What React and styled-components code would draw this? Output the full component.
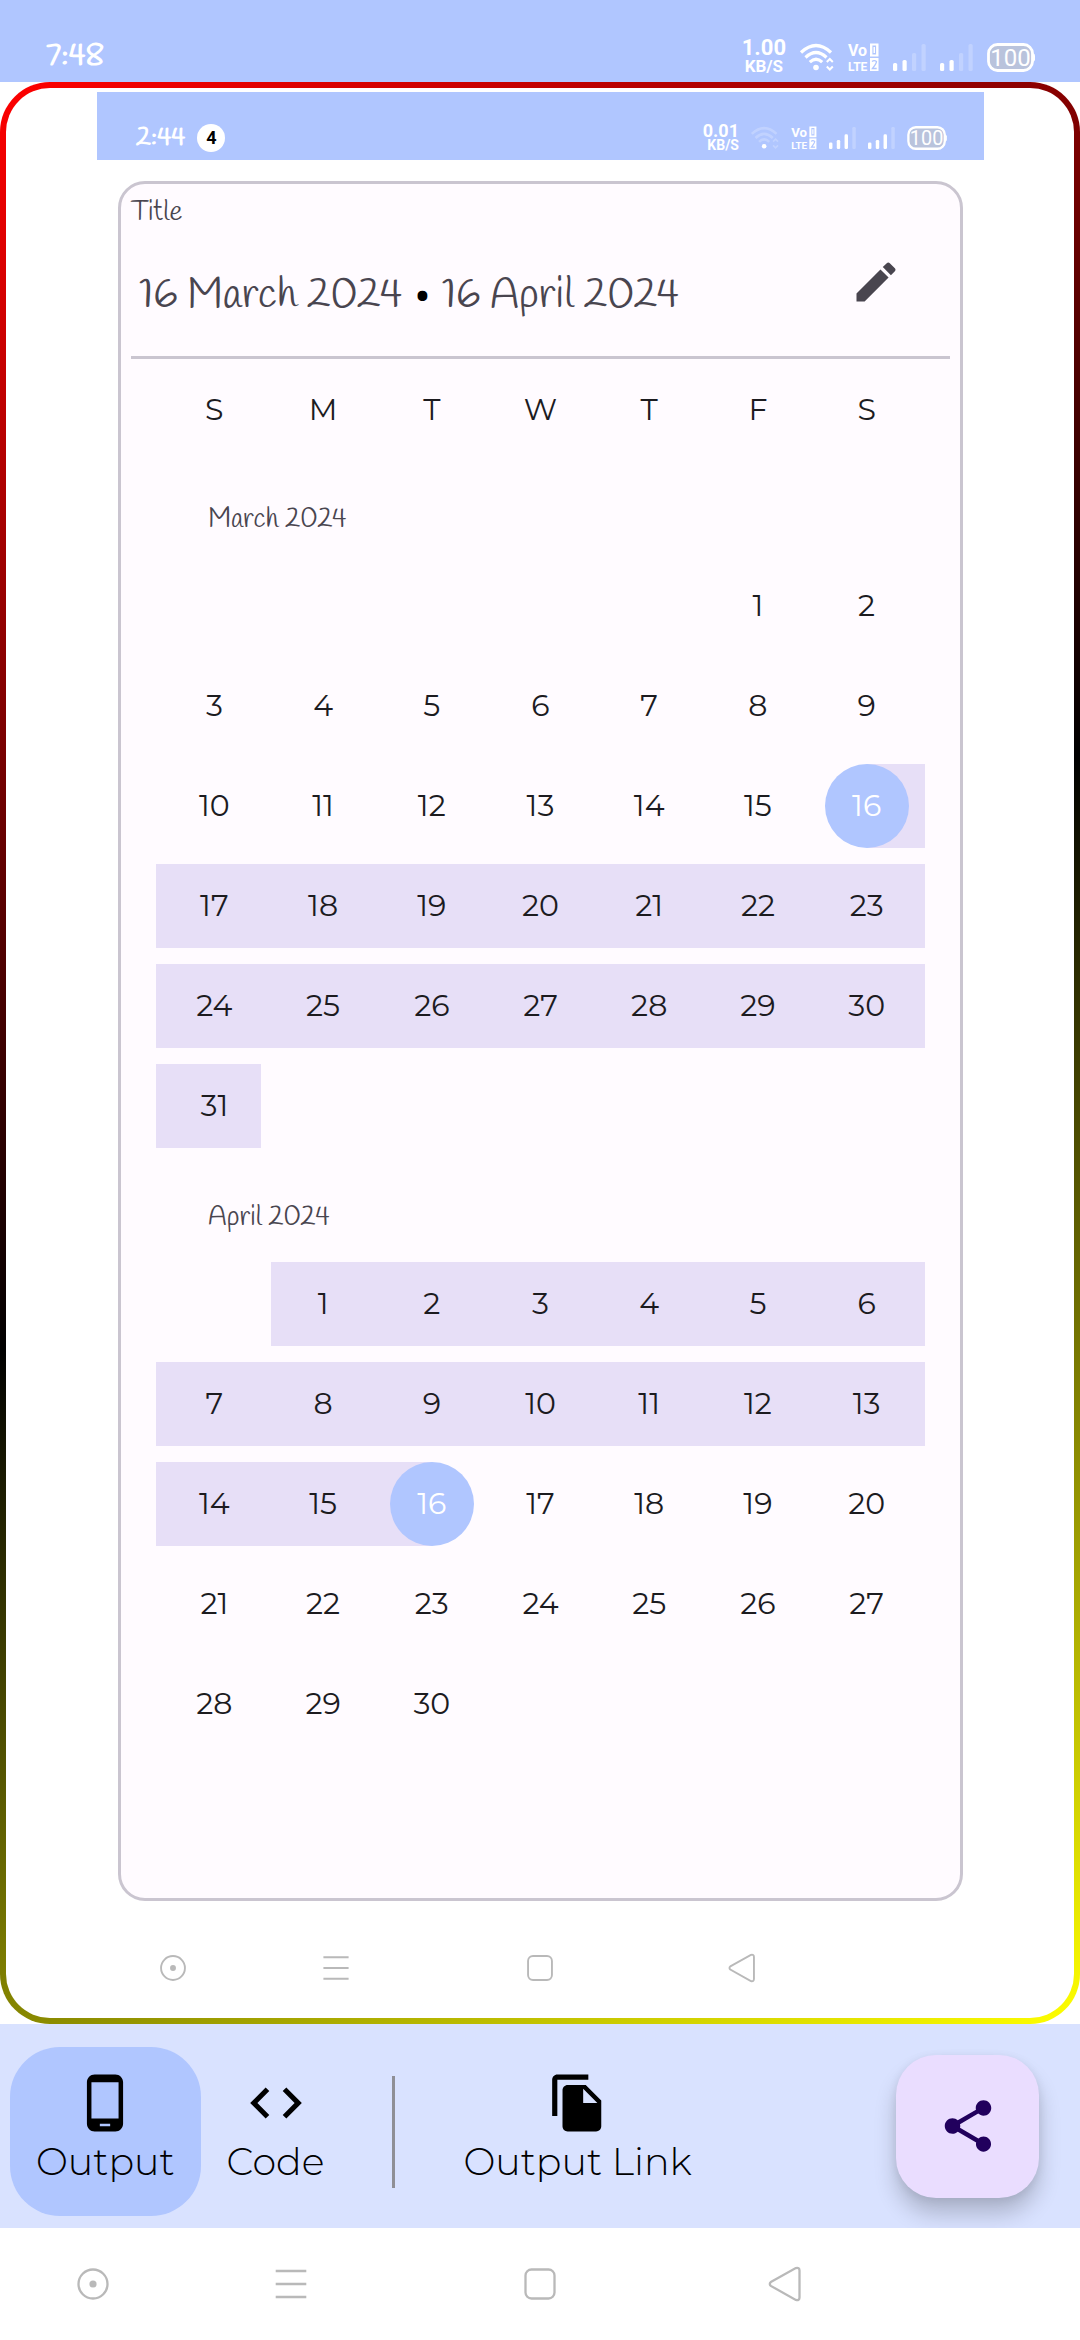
import React from "react";
import styled, { createGlobalStyle, css } from "styled-components";

const color = {
  primary: "#b0c6ff",
  bar: "#d9e2ff",
  surface: "#fffbff",
  outline: "#cac5d0",
  range: "#e7dff7",
  text: "#1c1b1f",
  muted: "#49454f",
  nav: "#b9b9b9",
};

const hand = `Handlee, Lato, "Open Sans", sans-serif`;
const body = `Montserrat, "Open Sans", "Noto Sans", sans-serif`;

const GlobalStyle = createGlobalStyle`
  * { box-sizing: border-box; }
  body { margin: 0; background: #fff; font-family: ${body}; }
  button { border: 0; padding: 0; background: none; font: inherit; color: inherit; cursor: pointer; }
  svg { display: block; flex: none; overflow: visible; }
`;

/* ---------- status bar ---------- */

const StatusBarRoot = styled.header`
  display: flex;
  align-items: center;
  justify-content: space-between;
  background: ${color.primary};
  color: #fff;
  height: ${(p) => (p.$small ? 68 : 82)}px;
  padding: ${(p) => (p.$small ? "24px 37px 0 39px" : "32px 45px 0 46px")};
`;

const StatusGroup = styled.div`
  display: flex;
  align-items: center;
  gap: ${(p) => (p.$small ? 12 : 14)}px;
`;

const Clock = styled.span`
  font-family: ${hand};
  font-weight: 700;
  font-size: ${(p) => (p.$small ? 26 : 31)}px;
  line-height: 32px;
`;

const Count = styled.span`
  display: grid;
  place-items: center;
  width: 28px;
  height: 28px;
  border-radius: 50%;
  background: #fff;
  color: #000;
  font: 700 18px/28px Roboto, sans-serif;
`;

const NetSpeed = styled.div`
  display: flex;
  flex-direction: column;
  align-items: ${(p) => (p.$small ? "flex-end" : "center")};
  font-family: Roboto, sans-serif;
  font-weight: 700;
  font-size: ${(p) => (p.$small ? 18 : 22)}px;
  line-height: ${(p) => (p.$small ? 15 : 18)}px;

  small {
    font-size: ${(p) => (p.$small ? 14 : 17)}px;
  }
`;

function Wifi({ small }) {
  const faded = small ? 0.22 : 1;
  return (
    <svg width={small ? 28 : 34} height={small ? 24 : 29} viewBox="0 0 34 29" fill="none" stroke="#fff">
      <g opacity={faded} strokeWidth="3.2">
        <path d="M1 9.5Q16 -4.5 31 9.5" />
        <path d="M5.5 14.5Q16 4.5 26.5 14.5" />
        <path d="M9.8 19.2Q16 13.2 22.2 19.2" />
        <path strokeWidth="2" d="M26.8 19L29.8 16L32.8 19M26.8 23.5L29.8 26.5L32.8 23.5" />
      </g>
      <circle cx="16" cy="24.5" r="2.8" fill="#fff" stroke="none" />
    </svg>
  );
}

function VoLte({ small }) {
  const face = { fontFamily: '"Liberation Sans Narrow", Roboto, sans-serif', fontWeight: 700 };
  return (
    <svg width={small ? 26 : 31} height={small ? 24 : 29} viewBox="0 0 31 29" fill="#fff">
      <text x="0" y="13" fontSize="16" {...face}>Vo</text>
      <text x="0" y="28" fontSize="12" {...face}>LTE</text>
      <path fillRule="evenodd" d="M22 .5h8.500v13h-8.500zM24.400 2.500v9h3.700v-9z" />
      <path d="M25.500 4h1.500v6h-1.500z" />
      <rect x="22" y="15" width="8.500" height="13" />
      <path d="M24 18.500Q26.200 16.800 28.500 18.500Q28.500 20.500 24.500 25.500H28.700" fill="none" stroke={color.primary} strokeWidth="1.300" />
    </svg>
  );
}

function Signal({ small, level }) {
  const bars = [
    [0, 20, 8],
    [9.5, 17, 11],
    [19, 10, 18],
    [28.5, 1, 27],
  ];
  return (
    <svg width={small ? 27 : 33} height={small ? 24 : 29} viewBox="0 0 33 29" fill="#fff">
      {bars.map(([x, y, h], i) => (
        <rect key={x} x={x} y={y} width="4.2" height={h} rx="1.6" opacity={i < level ? 1 : 0.22} />
      ))}
    </svg>
  );
}

function Battery({ small }) {
  return (
    <svg width={small ? 40 : 48} height={small ? 24 : 29} viewBox="0 0 48 29">
      <rect x="1.5" y="1.5" width="44" height="26" rx="9" fill="#b9c3dc" stroke="#fff" strokeWidth="2.8" />
      <path d="M46 10.5q2 0 2 2v4q0 2-2 2z" fill="#fff" />
      <text x="23.5" y="23" textAnchor="middle" fill="#fff" fontFamily="Roboto, sans-serif" fontWeight="400" fontSize="24">
        100
      </text>
    </svg>
  );
}

function StatusBar({ small, time, count, speed, level }) {
  return (
    <StatusBarRoot $small={small}>
      <StatusGroup $small={small}>
        <Clock $small={small}>{time}</Clock>
        {count && <Count>{count}</Count>}
      </StatusGroup>
      <StatusGroup $small={small}>
        <NetSpeed $small={small}>
          <span>{speed}</span>
          <small>KB/S</small>
        </NetSpeed>
        <Wifi small={small} />
        <VoLte small={small} />
        <Signal small={small} level={level} />
        <Signal small={small} level={level} />
        <Battery small={small} />
      </StatusGroup>
    </StatusBarRoot>
  );
}

/* ---------- system navigation ---------- */

const NavRoot = styled.nav`
  display: grid;
  grid-template-columns: 186fr 210fr 288fr 202fr 194fr;
  align-items: center;
  height: ${(p) => (p.$small ? 92 : 112)}px;
  background: #fff;

  svg {
    width: ${(p) => (p.$small ? 28 : 34)}px;
    height: ${(p) => (p.$small ? 28 : 34)}px;
  }
`;

const NavButton = styled.button`
  display: grid;
  place-items: center;
`;

const navShapes = [
  ["Assistant", <g key="a"><circle cx="17" cy="17" r="14.5" /><circle cx="17" cy="17" r="3.6" fill={color.nav} stroke="none" /></g>],
  ["Menu", <path key="m" d="M1.7 4H32.3M1.7 17H32.3M1.7 30H32.3" />],
  ["Home", <rect key="h" x="2.5" y="2.5" width="29" height="29" rx="6" />],
  ["Back", <path key="b" d="M2.8 15.1L27.8 1.1Q31.5 .2 31.5 3.5V30.5Q31.5 33.8 27.8 32.9L2.8 18.9Q.8 17 2.8 15.1Z" />],
];

function SystemNav({ small }) {
  return (
    <NavRoot $small={small}>
      {navShapes.map(([name, shape]) => (
        <NavButton key={name} type="button" aria-label={name}>
          <svg viewBox="0 0 34 34" fill="none" stroke={color.nav} strokeWidth="2.3">
            {shape}
          </svg>
        </NavButton>
      ))}
    </NavRoot>
  );
}

/* ---------- calendar ---------- */

const Card = styled.section`
  display: flex;
  flex-direction: column;
  flex: 1;
  margin: 21px;
  padding: 13px 10px 120px;
  border: 3px solid ${color.outline};
  border-radius: 27px;
  background: ${color.surface};
`;

const CardLabel = styled.span`
  font: 300 27px/32px ${hand};
  color: ${color.muted};
`;

const DateHeader = styled.div`
  display: flex;
  justify-content: space-between;
  align-items: flex-start;
  height: 127px;
  padding: 27px 48px 0 8px;
`;

const DateRange = styled.h1`
  display: flex;
  align-items: center;
  gap: 12px;
  margin: 0;
  padding-top: 14px;
  font: 300 42px/48px ${hand};
  color: ${color.muted};
`;

const Bullet = styled.span`
  padding-top: 4px;
  font-family: Roboto, sans-serif;
  font-weight: 700;
  color: #000;
`;

const EditButton = styled.button`
  && {
    color: ${color.muted};
  }
`;

const Divider = styled.hr`
  width: 100%;
  height: 3px;
  margin: 0;
  border: 0;
  background: ${color.outline};
`;

const Calendar = styled.div`
  display: flex;
  flex-direction: column;
  gap: 2px;
  padding: 11px 25px 0;
`;

const Week = styled.div`
  display: grid;
  grid-template-columns: repeat(14, 1fr);
  padding: 0 4px;
  height: ${(p) => p.$height || 84}px;
`;

const cell = css`
  grid-row: 1;
  grid-column: ${(p) => p.$col * 2 + 1} / span 2;
  place-self: center;
  display: grid;
  place-items: center;
  width: 84px;
  height: 84px;
  font-size: 30px;
  line-height: 36px;
`;

const Weekday = styled.span`
  ${cell}
  height: 80px;
  color: ${color.text};
`;

const Day = styled.button`
  && {
    ${cell}
    border-radius: 50%;
    color: ${(p) => (p.$selected ? "#fff" : color.text)};
    background: ${(p) => (p.$selected ? color.primary : "transparent")};
  }
`;

const Band = styled.span`
  grid-row: 1;
  grid-column: ${(p) => p.$from} / ${(p) => p.$to};
  margin-left: ${(p) => (p.$from === 1 ? -4 : p.$from === 3 ? 2 : 0)}px;
  margin-right: ${(p) => (p.$to === 15 ? -4 : p.$to === 3 ? 8 : 0)}px;
  background: ${color.range};
`;

const MonthName = styled.h2`
  margin: 0;
  padding: 52px 0 28px 52px;
  font: 300 27px/32px ${hand};
  color: ${color.muted};
`;

const Weeks = styled.div`
  display: grid;
  gap: 16px;
`;

const weekdays = ["S", "M", "T", "W", "T", "F", "S"];

const months = [
  {
    name: "March 2024",
    offset: 5,
    days: 31,
    selected: 16,
    bands: { 2: [14, 15], 3: [1, 15], 4: [1, 15], 5: [1, 3] },
  },
  {
    name: "April 2024",
    offset: 1,
    days: 30,
    selected: 16,
    bands: { 0: [3, 15], 1: [1, 15], 2: [1, 6] },
  },
];

function Month({ name, offset, days, selected, bands }) {
  const count = Math.ceil((offset + days) / 7);
  return (
    <section>
      <MonthName>{name}</MonthName>
      <Weeks>
        {Array.from({ length: count }, (_, w) => (
          <Week key={w}>
            {bands[w] && <Band $from={bands[w][0]} $to={bands[w][1]} />}
            {weekdays.map((_, c) => {
              const day = w * 7 + c - offset + 1;
              if (day < 1 || day > days) return null;
              return (
                <Day key={c} type="button" $col={c} $selected={day === selected}>
                  {day}
                </Day>
              );
            })}
          </Week>
        ))}
      </Weeks>
    </section>
  );
}

/* ---------- output frame ---------- */

const Page = styled.div`
  display: flex;
  flex-direction: column;
  min-height: 100vh;
`;

const Frame = styled.main`
  display: flex;
  flex-direction: column;
  flex: 1;
  padding: 4px 90px 4px 91px;
  border: 6px solid transparent;
  border-radius: 50px;
  background:
    linear-gradient(#fff, #fff) padding-box,
    linear-gradient(151deg, #f00, #000, #ff0) border-box;
`;

/* ---------- bottom bar ---------- */

const BottomBar = styled.footer`
  display: flex;
  align-items: center;
  justify-content: space-between;
  height: 204px;
  padding: 0 41px 0 10px;
  background: ${color.bar};
  overflow: hidden;
`;

const Tabs = styled.div`
  display: flex;
  align-items: center;
  padding-top: 11px;
`;

const Tab = styled.button`
  && {
    display: flex;
    flex-direction: column;
    align-items: center;
    gap: 4px;
    height: 169px;
    padding: 25px 26px 0;
    border-radius: 50px;
    color: #000;
    background: ${(p) => (p.$active ? color.primary : "transparent")};
    font: 300 38px/48px ${body};
  }
`;

const Rule = styled.span`
  width: 3px;
  height: 112px;
  margin: 0 42px;
  background: #8f8f96;
`;

const Fab = styled.button`
  && {
    display: grid;
    place-items: center;
    width: 143px;
    height: 143px;
    border-radius: 40px;
    background: #eaddff;
    color: #21005d;
    box-shadow: 0 16px 22px rgba(0, 0, 0, 0.2), 0 2px 10px rgba(0, 0, 0, 0.08);
  }
`;

function Glyph({ d, size = 62 }) {
  return (
    <svg width={size} height={size} viewBox="0 0 24 24" fill="currentColor" aria-hidden="true">
      <path d={d} />
    </svg>
  );
}

const paths = {
  edit: "M3 17.25V21h3.75L17.81 9.94l-3.75-3.75L3 17.25zM20.71 7.04c.39-.39.39-1.02 0-1.41l-2.34-2.34c-.39-.39-1.02-.39-1.41 0l-1.83 1.83 3.75 3.75 1.83-1.83z",
  phone: "M16 1H8C6.34 1 5 2.34 5 4v16c0 1.66 1.34 3 3 3h8c1.66 0 3-1.34 3-3V4c0-1.66-1.34-3-3-3zm-2 20h-4v-1h4v1zm3.25-3H6.75V4h10.5v14z",
  code: "M9.4 16.6L4.8 12l4.6-4.6L8 6l-6 6 6 6 1.4-1.4zm5.2 0l4.6-4.6-4.6-4.6L16 6l6 6-6 6-1.4-1.4z",
  copy: "M16 1H4c-1.1 0-2 .9-2 2v14h2V3h12V1zm-1 4l6 6v10c0 1.1-.9 2-2 2H7.99C6.89 23 6 22.1 6 21l.01-14c0-1.1.89-2 1.99-2h7zm-1 7h5.5L14 6.5V12z",
  share: "M18 16.08c-.76 0-1.44.3-1.96.77L8.91 12.7c.05-.23.09-.46.09-.7s-.04-.47-.09-.7l7.05-4.11c.54.5 1.25.81 2.04.81 1.66 0 3-1.34 3-3s-1.34-3-3-3-3 1.34-3 3c0 .24.04.47.09.7L8.04 9.81C7.5 9.31 6.79 9 6 9c-1.66 0-3 1.34-3 3s1.34 3 3 3c.79 0 1.5-.31 2.04-.81l7.12 4.16c-.05.21-.08.43-.08.65 0 1.61 1.31 2.92 2.92 2.92s2.92-1.31 2.92-2.92-1.31-2.92-2.92-2.92z",
};

export default function App() {
  return (
    <Page>
      <GlobalStyle />
      <StatusBar time="7:48" speed="1.00" level={2} />
      <Frame>
        <StatusBar small time="2:44" count="4" speed="0.01" level={3} />
        <Card>
          <CardLabel>Title</CardLabel>
          <DateHeader>
            <DateRange>
              <span>16 March 2024</span>
              <Bullet>•</Bullet>
              <span>16 April 2024</span>
            </DateRange>
            <EditButton type="button" aria-label="Edit dates">
              <Glyph d={paths.edit} size={52} />
            </EditButton>
          </DateHeader>
          <Divider />
          <Calendar>
            <Week $height={80}>
              {weekdays.map((d, i) => (
                <Weekday key={i} $col={i}>{d}</Weekday>
              ))}
            </Week>
            {months.map((m) => (
              <Month key={m.name} {...m} />
            ))}
          </Calendar>
        </Card>
        <SystemNav small />
      </Frame>
      <BottomBar>
        <Tabs>
          <Tab type="button" $active>
            <Glyph d={paths.phone} />
            Output
          </Tab>
          <Tab type="button">
            <Glyph d={paths.code} />
            Code
          </Tab>
          <Rule />
          <Tab type="button">
            <Glyph d={paths.copy} />
            Output Link
          </Tab>
        </Tabs>
        <Fab type="button" aria-label="Share">
          <Glyph d={paths.share} />
        </Fab>
      </BottomBar>
      <SystemNav />
    </Page>
  );
}
